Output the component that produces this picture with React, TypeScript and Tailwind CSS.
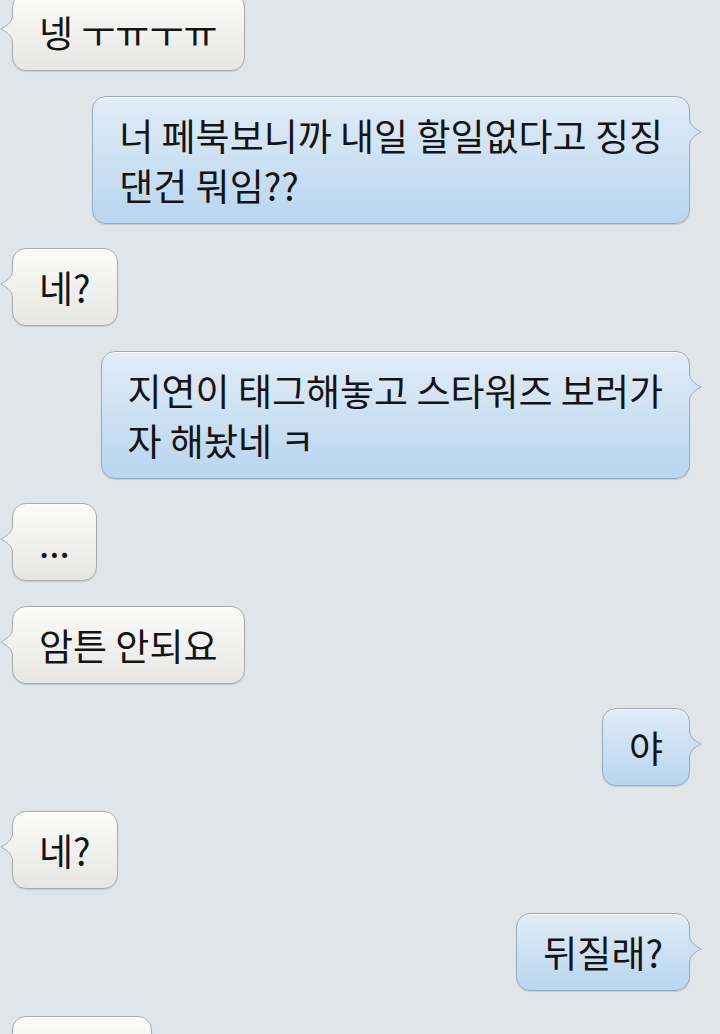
import React from "react";

type Msg = { side: "l" | "r"; lines: string[] };

const messages: Msg[] = [
  { side: "l", lines: ["넹 ㅜㅠㅜㅠ"] },
  { side: "r", lines: ["너 페북보니까 내일 할일없다고 징징", "댄건 뭐임??"] },
  { side: "l", lines: ["네?"] },
  { side: "r", lines: ["지연이 태그해놓고 스타워즈 보러가", "자 해놨네 ㅋ"] },
  { side: "l", lines: ["..."] },
  { side: "l", lines: ["암튼 안되요"] },
  { side: "r", lines: ["야"] },
  { side: "l", lines: ["네?"] },
  { side: "r", lines: ["뒤질래?"] },
  { side: "l", lines: ["왜요?"] },
];

// tail colour roughly matches the gradient at the tail's height
const Tail = ({ side, multi }: { side: "l" | "r"; multi: boolean }) => {
  const fill =
    side === "l" ? "#f1f2f0" : multi ? "#d5e5f5" : "#cde0f3";
  const stroke = side === "l" ? "#a8abae" : "#98abbd";
  if (side === "l") {
    return (
      <svg
        width="14"
        height="26"
        viewBox="0 0 14 26"
        className="absolute left-[-13px] top-[22px]"
      >
        <path
          d="M14 0 L12.5 0 C12 7 5 11 0.8 13 C5 15 12 19 12.5 26 L14 26 Z"
          fill={fill}
        />
        <path
          d="M12.5 0 C12 7 5 11 0.8 13 C5 15 12 19 12.5 26"
          fill="none"
          stroke={stroke}
          strokeWidth="1"
        />
      </svg>
    );
  }
  return (
    <svg
      width="14"
      height="26"
      viewBox="0 0 14 26"
      className="absolute right-[-13px] top-[22px]"
    >
      <path
        d="M0 0 L1.5 0 C2 7 9 11 13.2 13 C9 15 2 19 1.5 26 L0 26 Z"
        fill={fill}
      />
      <path
        d="M1.5 0 C2 7 9 11 13.2 13 C9 15 2 19 1.5 26"
        fill="none"
        stroke={stroke}
        strokeWidth="1"
      />
    </svg>
  );
};

const Bubble = ({ msg }: { msg: Msg }) => {
  const left = msg.side === "l";
  return (
    <div className={`flex ${left ? "justify-start" : "justify-end"}`}>
      <div
        className={`relative rounded-[14px] border px-[26px] py-[13px] text-[37px] leading-[50px] text-[#141414] shadow-[0_1px_1px_rgba(0,0,0,0.12),inset_0_1px_0_rgba(255,255,255,0.8)] ${
          left
            ? "border-[#a8abae] bg-gradient-to-b from-[#fbfbfa] to-[#e6e7e5]"
            : "border-[#98abbd] bg-gradient-to-b from-[#e1ecf7] to-[#b9d5ef]"
        }`}
      >
        <Tail side={msg.side} multi={msg.lines.length > 1} />
        {msg.lines.map((line, i) => (
          <div key={i} className="whitespace-pre">
            {line}
          </div>
        ))}
      </div>
    </div>
  );
};

export default function App() {
  return (
    <div className="h-[1034px] w-[720px] overflow-hidden bg-[#e0e5ea] font-['Noto_Sans_CJK_KR','Noto_Sans',sans-serif]">
      <div className="mt-[-7px] flex flex-col gap-[24.5px] pl-[12px] pr-[30px]">
        {messages.map((m, i) => (
          <Bubble key={i} msg={m} />
        ))}
      </div>
    </div>
  );
}
